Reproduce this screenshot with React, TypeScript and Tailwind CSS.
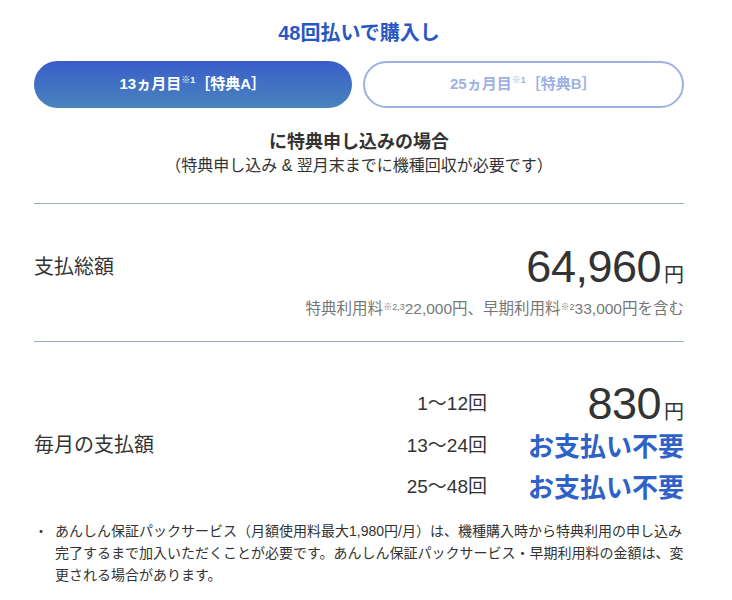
import React from "react";

const font = {
  fontFamily: '"Liberation Sans", "Noto Sans CJK JP", sans-serif',
};

const rows = [
  { range: "1〜12回", price: "830", h: "h-[44px]" },
  { range: "13〜24回", price: null, h: "h-[41px]" },
  { range: "25〜48回", price: null, h: "h-[41px]" },
];

function Yen({ value }: { value: string }) {
  return (
    <span className="flex items-baseline justify-end">
      <span className="text-[45px] leading-[48px] tracking-[-0.5px]">{value}</span>
      <span className="ml-[3px] text-[20px]">円</span>
    </span>
  );
}

export default function App() {
  return (
    <div className="min-h-[600px] w-[732px] bg-white text-[#333]" style={font}>
      <div className="ml-[34px] w-[650px] pt-[19px]">
        <h2 className="text-center text-[20px] font-bold leading-[28px] text-[#2757c4]">
          48回払いで購入し
        </h2>

        {/* タブ */}
        <div className="mt-[14px] flex gap-[11px]">
          <button className="flex h-[47px] flex-1 items-center justify-center rounded-full bg-gradient-to-b from-[#3a5cc9] to-[#4a84bc] text-[15px] font-bold text-white">
            13ヵ月目<sup className="text-[9px]">※1</sup>［特典A］
          </button>
          <button className="flex h-[47px] flex-1 items-center justify-center rounded-full border-2 border-[#9db2e3] bg-white text-[15px] font-bold text-[#9db2e3]">
            25ヵ月目<sup className="text-[9px]">※1</sup>［特典B］
          </button>
        </div>

        <p className="mt-[22px] text-center text-[18px] font-bold leading-[24px]">
          に特典申し込みの場合
        </p>
        <p className="text-center text-[16px] leading-[24px]">
          （特典申し込み & 翌月末までに機種回収が必要です）
        </p>

        <div className="mt-[25px] h-px bg-[#9aaac8]" />

        {/* 支払総額 */}
        <div className="flex h-[48px] items-center justify-between mt-[39px]">
          <span className="text-[20px]">支払総額</span>
          <Yen value="64,960" />
        </div>
        <p className="mt-[7px] text-right text-[15.5px] leading-[22px] text-[#777]">
          特典利用料<sup className="text-[9px]">※2,3</sup>22,000円、早期利用料<sup className="text-[9px]">※2</sup>33,000円を含む
        </p>

        <div className="mt-[21px] h-px bg-[#9aaac8]" />

        {/* 毎月の支払額 */}
        <div className="mt-[40px] flex items-center justify-between">
          <span className="text-[20px]">毎月の支払額</span>
          <div className="grid grid-cols-[auto_156px] gap-x-[41px]">
            {rows.map((row) => (
              <React.Fragment key={row.range}>
                <span className={`flex items-center justify-end text-[19px] ${row.h}`}>{row.range}</span>
                <span className={`flex items-center justify-end ${row.h}`}>
                  {row.price ? (
                    <Yen value={row.price} />
                  ) : (
                    <span className="text-[26px] font-bold leading-[34px] text-[#2e62c8]">
                      お支払い不要
                    </span>
                  )}
                </span>
              </React.Fragment>
            ))}
          </div>
        </div>

        <div className="mt-[12px] flex text-[14px] leading-[22px]">
          <span className="w-[21px] shrink-0">・</span>
          <p className="w-[632px] shrink-0">
            あんしん保証パックサービス（月額使用料最大1,980円/月）は、機種購入時から特典利用の申し込み完了するまで加入いただくことが必要です。あんしん保証パックサービス・早期利用料の金額は、変更される場合があります。
          </p>
        </div>
      </div>
    </div>
  );
}
